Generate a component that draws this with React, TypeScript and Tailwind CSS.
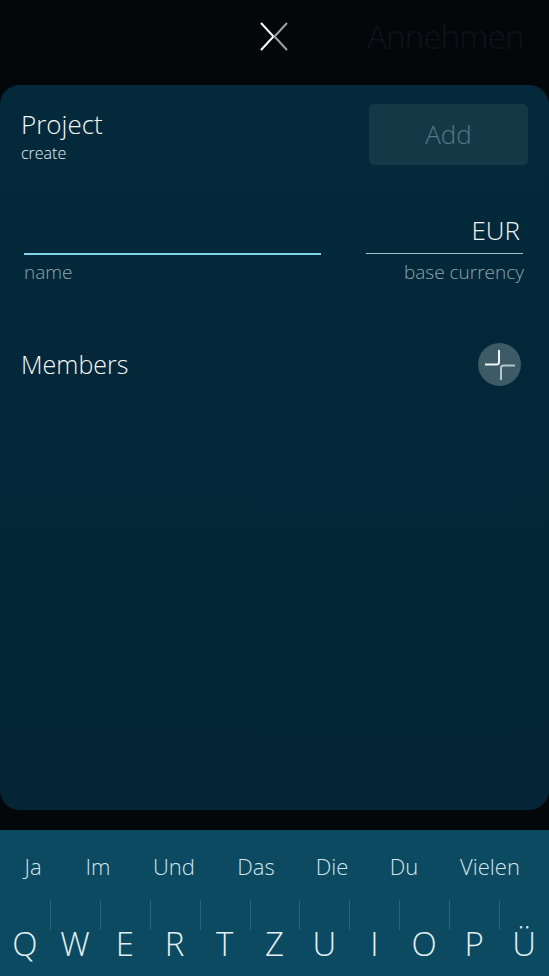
import React from 'react';

const suggestions = ['Ja', 'Im', 'Und', 'Das', 'Die', 'Du', 'Vielen'];
const suggestionX = [33, 98, 174, 256, 332, 404, 490];
const keys = ['Q', 'W', 'E', 'R', 'T', 'Z', 'U', 'I', 'O', 'P', 'Ü'];

const CloseIcon = () => (
  <svg width="30" height="30" viewBox="0 0 30 30" fill="none">
    <path d="M2 1 L14.5 14.5 L2 28" stroke="#ffffff" strokeWidth="2" />
    <path d="M28 1 L15.5 14.5 L28 28" stroke="#9ea3a5" strokeWidth="2" />
  </svg>
);

const PlusIcon = () => (
  <svg width="32" height="32" viewBox="0 0 32 32" fill="none">
    <path d="M15 1 V13 Q15 15.5 12.5 15.5 H1" stroke="#eef4f5" strokeWidth="2" />
    <path d="M17 31 V19 Q17 16.5 19.5 16.5 H31" stroke="#b4c6cb" strokeWidth="2" />
  </svg>
);

const App = () => {
  return (
    <div
      className="h-[976px] w-[549px] bg-[#030709] flex flex-col overflow-hidden"
      style={{ fontFamily: '"Open Sans", "Noto Sans", sans-serif' }}
    >
      {/* Kopfzeile */}
      <div className="h-[85px] relative shrink-0">
        <div className="absolute left-[259px] top-[22px]">
          <CloseIcon />
        </div>
        <span className="absolute left-[367px] top-[12px] text-[33px] font-light text-[#0d1417] tracking-tight">
          Annehmen
        </span>
      </div>

      {/* Dialog */}
      <div className="h-[725px] shrink-0 rounded-[20px] bg-gradient-to-b from-[#03293a] to-[#032536] px-[21px] pt-[19px]">
        <div className="flex justify-between">
          <div className="pt-[2px]">
            <div className="text-[26px] leading-[36px] font-light text-[#f4f8f9]">Project</div>
            <div className="text-[16px] leading-[22px] font-light text-[#e8eef0]">create</div>
          </div>
          <div className="w-[159px] h-[61px] rounded-[5px] bg-[#133947] flex items-center justify-center text-[26px] font-light text-[#577885]">
            Add
          </div>
        </div>

        <div className="flex justify-between mt-[45px] pl-[3px]">
          <div className="w-[297px]">
            <div className="h-[43px]" />
            <div className="h-[2px] bg-[#7fd4ea]" />
            <div className="text-[19px] leading-[24px] mt-[5px] font-light text-[#8fa5ae]">name</div>
          </div>
          <div className="w-[157px] mr-[5px] flex flex-col items-end">
            <div className="h-[43px] text-[26px] leading-[40px] font-light text-[#f0f6f8] pr-[3px]">EUR</div>
            <div className="h-px w-full bg-[#a8c0c8]" />
            <div className="text-[19px] leading-[24px] mt-[6px] font-light text-[#8fa5ae] whitespace-nowrap -mr-[1px]">base currency</div>
          </div>
        </div>

        <div className="flex justify-between items-center mt-[59px] pr-[7px]">
          <span className="text-[25px] font-light text-[#f2f7f8]">Members</span>
          <div className="w-[43px] h-[43px] rounded-full bg-[#3e5a66] flex items-center justify-center">
            <PlusIcon />
          </div>
        </div>
      </div>

      <div className="h-[20px] shrink-0" />

      {/* Tastatur */}
      <div className="flex-1 bg-[#0b4a60] flex flex-col">
        <div className="h-[72px] relative">
          {suggestions.map((s, i) => (
            <span
              key={s}
              className="absolute top-[20px] text-[22px] font-light text-[#d6e6ec] -translate-x-1/2"
              style={{ left: suggestionX[i] }}
            >
              {s}
            </span>
          ))}
        </div>
        <div className="flex flex-1">
          {keys.map((k, i) => (
            <div key={k} className="flex-1 relative flex justify-center">
              {i > 0 && <div className="absolute left-0 top-[-2px] h-[30px] w-px bg-[#2a6479]" />}
              <span className="mt-[17px] text-[33px] font-light text-[#e2eff3]">{k}</span>
            </div>
          ))}
        </div>
      </div>
    </div>
  );
};

export default App;
